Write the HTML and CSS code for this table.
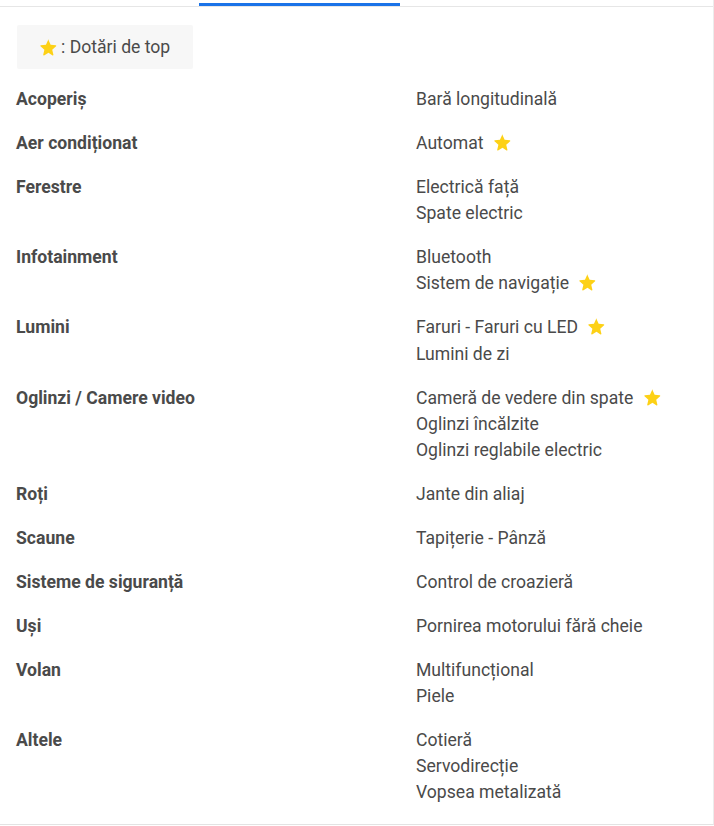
FILE: index.html
```html
<!DOCTYPE html>
<html lang="ro">
<head>
<meta charset="utf-8">
<title>Dotări</title>
<link rel="stylesheet" href="styles.css">
</head>
<body>
<div class="page">
  <div class="tabs">
    <div class="tab"></div>
    <div class="tab active"></div>
  </div>
  <div class="legend">
    <svg class="star" viewBox="0 0 24 24"><path d="M12 2.6l2.7 6 6.5.6c.6.1.9.9.4 1.3l-4.9 4.3 1.5 6.4c.1.6-.5 1.1-1.1.8L12 18.6l-5.6 3.4c-.5.3-1.2-.2-1.1-.8l1.5-6.4-4.9-4.3c-.5-.4-.2-1.2.4-1.3l6.5-.6 2.7-6c.2-.6 1.1-.6 1.3 0z"/></svg>
    <span>: Dotări de top</span>
  </div>
  <div class="specs">
    <div class="row"><div class="label">Acoperiș</div><div class="values"><div>Bară longitudinală</div></div></div>
    <div class="row"><div class="label">Aer condiționat</div><div class="values"><div>Automat <svg class="star" viewBox="0 0 24 24"><path d="M12 2.6l2.7 6 6.5.6c.6.1.9.9.4 1.3l-4.9 4.3 1.5 6.4c.1.6-.5 1.1-1.1.8L12 18.6l-5.6 3.4c-.5.3-1.2-.2-1.1-.8l1.5-6.4-4.9-4.3c-.5-.4-.2-1.2.4-1.3l6.5-.6 2.7-6c.2-.6 1.1-.6 1.3 0z"/></svg></div></div></div>
    <div class="row"><div class="label">Ferestre</div><div class="values"><div>Electrică față</div><div>Spate electric</div></div></div>
    <div class="row"><div class="label">Infotainment</div><div class="values"><div>Bluetooth</div><div>Sistem de navigație <svg class="star" viewBox="0 0 24 24"><path d="M12 2.6l2.7 6 6.5.6c.6.1.9.9.4 1.3l-4.9 4.3 1.5 6.4c.1.6-.5 1.1-1.1.8L12 18.6l-5.6 3.4c-.5.3-1.2-.2-1.1-.8l1.5-6.4-4.9-4.3c-.5-.4-.2-1.2.4-1.3l6.5-.6 2.7-6c.2-.6 1.1-.6 1.3 0z"/></svg></div></div></div>
    <div class="row"><div class="label">Lumini</div><div class="values"><div>Faruri - Faruri cu LED <svg class="star" viewBox="0 0 24 24"><path d="M12 2.6l2.7 6 6.5.6c.6.1.9.9.4 1.3l-4.9 4.3 1.5 6.4c.1.6-.5 1.1-1.1.8L12 18.6l-5.6 3.4c-.5.3-1.2-.2-1.1-.8l1.5-6.4-4.9-4.3c-.5-.4-.2-1.2.4-1.3l6.5-.6 2.7-6c.2-.6 1.1-.6 1.3 0z"/></svg></div><div>Lumini de zi</div></div></div>
    <div class="row"><div class="label">Oglinzi / Camere video</div><div class="values"><div>Cameră de vedere din spate <svg class="star" viewBox="0 0 24 24"><path d="M12 2.6l2.7 6 6.5.6c.6.1.9.9.4 1.3l-4.9 4.3 1.5 6.4c.1.6-.5 1.1-1.1.8L12 18.6l-5.6 3.4c-.5.3-1.2-.2-1.1-.8l1.5-6.4-4.9-4.3c-.5-.4-.2-1.2.4-1.3l6.5-.6 2.7-6c.2-.6 1.1-.6 1.3 0z"/></svg></div><div>Oglinzi încălzite</div><div>Oglinzi reglabile electric</div></div></div>
    <div class="row"><div class="label">Roți</div><div class="values"><div>Jante din aliaj</div></div></div>
    <div class="row"><div class="label">Scaune</div><div class="values"><div>Tapițerie - Pânză</div></div></div>
    <div class="row"><div class="label">Sisteme de siguranță</div><div class="values"><div>Control de croazieră</div></div></div>
    <div class="row"><div class="label">Uși</div><div class="values"><div>Pornirea motorului fără cheie</div></div></div>
    <div class="row"><div class="label">Volan</div><div class="values"><div>Multifuncțional</div><div>Piele</div></div></div>
    <div class="row"><div class="label">Altele</div><div class="values"><div>Cotieră</div><div>Servodirecție</div><div>Vopsea metalizată</div></div></div>
  </div>
</div>
</body>
</html>
```

FILE: styles.css
```css
html, body {
  margin: 0;
  padding: 0;
  background: #fff;
}
body {
  font-family: Roboto, "Liberation Sans", sans-serif;
  font-size: 17.6px;
  color: #4a4a4a;
}
.page {
  width: 713px;
  height: 824px;
  border-right: 1px solid #ececec;
  border-bottom: 1px solid #e3e3e3;
  overflow: hidden;
}
.tabs {
  display: flex;
  border-bottom: 1px solid #e6e6e6;
}
.tab {
  width: 201px;
  height: 3px;
  padding-top: 3px;
}
.tab:first-child {
  width: 199px;
}
.tab.active {
  height: 0;
  border-bottom: 3px solid #1a73e8;
}
.legend {
  display: flex;
  align-items: center;
  width: 176px;
  height: 44px;
  margin: 18px 0 0 17px;
  padding-left: 22px;
  box-sizing: border-box;
  background: #f7f7f7;
  border-radius: 2px;
  gap: 3px;
}
.legend span {
  line-height: 20px;
}
.star {
  width: 19px;
  height: 19px;
  fill: #fdd116;
  flex: none;
}
.specs {
  padding-top: 8.4px;
}
.row {
  display: grid;
  grid-template-columns: 400px 1fr;
  padding: 8.8px 0 8.8px 16px;
  line-height: 26.3px;
}
.label {
  font-weight: 700;
}
.values .star {
  vertical-align: -3px;
  margin-left: 5px;
}
```
